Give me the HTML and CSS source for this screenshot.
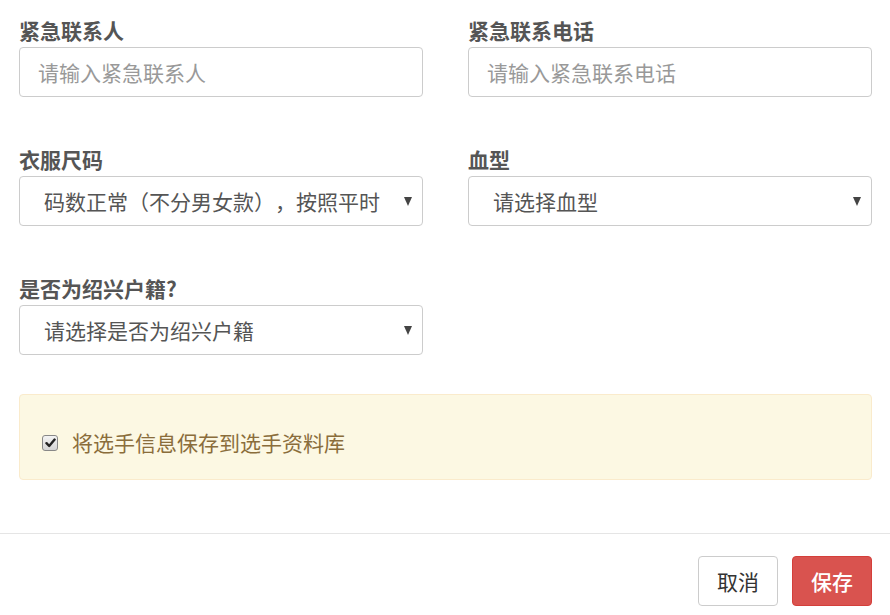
FILE: index.html
```html
<!DOCTYPE html>
<html lang="zh-CN">
<head>
<meta charset="utf-8">
<link rel="stylesheet" href="styles.css">
</head>
<body>
<div class="form">
  <div class="row">
    <div class="group">
      <label class="label">紧急联系人</label>
      <input class="control" type="text" placeholder="请输入紧急联系人">
    </div>
    <div class="group">
      <label class="label">紧急联系电话</label>
      <input class="control" type="text" placeholder="请输入紧急联系电话">
    </div>
  </div>
  <div class="row">
    <div class="group">
      <label class="label">衣服尺码</label>
      <div class="select-wrap">
        <select class="control select"><option>码数正常（不分男女款），按照平时</option></select>
      </div>
    </div>
    <div class="group">
      <label class="label">血型</label>
      <div class="select-wrap">
        <select class="control select"><option>请选择血型</option></select>
      </div>
    </div>
  </div>
  <div class="row">
    <div class="group">
      <label class="label">是否为绍兴户籍?</label>
      <div class="select-wrap">
        <select class="control select"><option>请选择是否为绍兴户籍</option></select>
      </div>
    </div>
    <div class="group"></div>
  </div>
  <div class="alert">
    <label class="check">
      <span class="box"><svg width="11" height="10" viewBox="0 0 11 10"><path d="M1.5 5.2 L4.2 8 L9.6 1.6" fill="none" stroke="#222" stroke-width="2.4" stroke-linecap="round" stroke-linejoin="round"/></svg></span>
      <span>将选手信息保存到选手资料库</span>
    </label>
  </div>
</div>
<div class="footer">
  <button class="btn btn-default">取消</button>
  <button class="btn btn-danger">保存</button>
</div>
</body>
</html>
```
FILE: styles.css
```css
* { box-sizing: border-box; }
html, body { margin: 0; padding: 0; background: #fff; }
body {
  font-family: "Noto Sans CJK SC", "Liberation Sans", sans-serif;
  font-size: 21px;
  color: #555;
  text-spacing-trim: space-all;
}
.form { padding: 18px 18px 0 19px; }
.row {
  display: grid;
  grid-template-columns: 1fr 1fr;
  column-gap: 45px;
  margin-bottom: 50px;
}
.group { display: flex; flex-direction: column; }
.label {
  display: block;
  font-weight: bold;
  line-height: 24px;
  height: 24px;
  margin-bottom: 5px;
  color: #555;
}
.control {
  display: block;
  width: 100%;
  height: 50px;
  border: 1px solid #ccc;
  border-radius: 4px;
  background: #fff;
  font-family: inherit;
  font-size: 21px;
  color: #555;
  padding: 0 18px;
  outline: none;
  margin: 0;
  text-spacing-trim: space-all;
}
.control::placeholder { color: #999; }
.select-wrap { position: relative; }
.select {
  -webkit-appearance: none;
  appearance: none;
  padding: 0 40px 0 24px;
}
.select-wrap::after {
  content: "";
  position: absolute;
  right: 11px;
  top: 21px;
  width: 0;
  height: 0;
  border-left: 4.5px solid transparent;
  border-right: 4.5px solid transparent;
  border-top: 9px solid #444;
  pointer-events: none;
}
.alert {
  margin-top: -11px;
  height: 86px;
  background: #fcf8e3;
  border: 1px solid #faebcc;
  border-radius: 4px;
  color: #8a6d3b;
  padding: 33px 0 0 22px;
}
.check {
  display: flex;
  align-items: center;
  gap: 14px;
  line-height: 28px;
}
.box {
  width: 16px;
  height: 16px;
  border: 1px solid #888;
  border-radius: 3px;
  background: linear-gradient(#f4f4f4, #d4d4d4);
  display: flex;
  align-items: center;
  justify-content: center;
  margin-top: 1px;
}
.footer {
  margin-top: 53px;
  border-top: 1px solid #e5e5e5;
  padding: 22px 18px 0 0;
  display: flex;
  justify-content: flex-end;
  gap: 14px;
}
.btn {
  width: 80px;
  height: 50px;
  border-radius: 4px;
  font-family: inherit;
  font-size: 21px;
  padding: 0;
  cursor: pointer;
}
.btn-default { background: #fff; border: 1px solid #ccc; color: #333; }
.btn-danger { background: #d9534f; border: 1px solid #d43f3a; color: #fff; font-weight: 500; }
```
